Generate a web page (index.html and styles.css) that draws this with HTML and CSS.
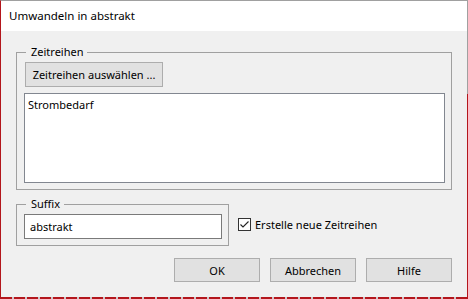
FILE: index.html
```html
<!DOCTYPE html>
<html lang="de">
<head>
<meta charset="utf-8">
<title>Umwandeln in abstrakt</title>
<link rel="stylesheet" href="styles.css">
</head>
<body>
<div class="window">
  <div class="titlebar">Umwandeln in abstrakt</div>
  <div class="content">
    <fieldset class="group group-series">
      <legend>Zeitreihen</legend>
      <button class="btn btn-select" type="button">Zeitreihen auswählen ...</button>
      <div class="listbox">
        <div class="list-item">Strombedarf</div>
      </div>
    </fieldset>
    <div class="suffix-row">
      <fieldset class="group group-suffix">
        <legend>Suffix</legend>
        <div class="textbox">abstrakt</div>
      </fieldset>
      <label class="check">
        <span class="check-box">
          <svg width="11" height="11" viewBox="0 0 11 11"><path d="M1.5 5.5 L4 8 L9.5 2.5" fill="none" stroke="#222" stroke-width="1.1"/></svg>
        </span>
        <span class="check-label">Erstelle neue Zeitreihen</span>
      </label>
    </div>
    <div class="actions">
      <button class="btn btn-action" type="button">OK</button>
      <button class="btn btn-action" type="button">Abbrechen</button>
      <button class="btn btn-action" type="button">Hilfe</button>
    </div>
  </div>
</div>
</body>
</html>
```
FILE: styles.css
```css
html, body {
  margin: 0;
  padding: 0;
}
body {
  width: 468px;
  height: 299px;
  overflow: hidden;
  background: #f0f0f0;
  font-family: "Noto Sans", "Open Sans", sans-serif;
  font-size: 11px;
  color: #000;
}
.window {
  box-sizing: border-box;
  width: 468px;
  height: 299px;
  border-left: 1px solid #b3161c;
  border-top: 1px solid #a0a0a0;
  background:
    linear-gradient(#a0a0a0, #a0a0a0) right top / 1px 93px no-repeat,
    linear-gradient(#b3161c, #b3161c) right 93px / 1px 100% no-repeat,
    repeating-linear-gradient(to right, #b3161c 0 11px, #c9c9c9 11px 13px) left bottom / 100% 2px no-repeat,
    #f0f0f0;
  display: flex;
  flex-direction: column;
}
.titlebar {
  height: 30px;
  line-height: 30px;
  background: #fff;
  margin-right: 1px;
  padding-left: 8px;
  font-size: 11.5px;
  white-space: nowrap;
}
.content {
  padding: 13px 16px 0 15px;
  display: flex;
  flex-direction: column;
}
.group {
  margin: 0;
  border: 1px solid #a0a0a0;
  padding: 2px 6px 6px 7px;
  min-width: 0;
}
.group legend {
  margin-left: 2px;
  padding: 0 4px 0 5px;
  line-height: 16px;
  height: 16px;
}
.btn {
  font: inherit;
  color: #000;
  background: #e1e1e1;
  border: 1px solid #adadad;
  border-radius: 0;
  padding: 0;
  margin: 0;
  height: 25px;
}
.btn-select {
  display: block;
  width: 138px;
  margin-left: 1px;
}
.listbox {
  margin-top: 6px;
  height: 82px;
  background: #fff;
  border: 1px solid #828790;
  padding: 3px 3px;
}
.list-item {
  line-height: 16px;
}
.suffix-row {
  margin-top: 6px;
  display: flex;
  align-items: center;
  gap: 9px;
}
.group-suffix {
  width: 198px;
}
.textbox {
  height: 23px;
  line-height: 23px;
  background: #fff;
  border: 1px solid #7a7a7a;
  padding-left: 5px;
}
.check {
  display: flex;
  align-items: center;
  gap: 4px;
  margin-top: 6px;
}
.check-box {
  width: 11px;
  height: 11px;
  border: 1px solid #333;
  background: #fff;
  display: block;
}
.check-box svg {
  display: block;
}
.actions {
  margin-top: 12px;
  display: flex;
  justify-content: flex-end;
  gap: 10px;
}
.btn-action {
  width: 86px;
  height: 24px;
}
```
